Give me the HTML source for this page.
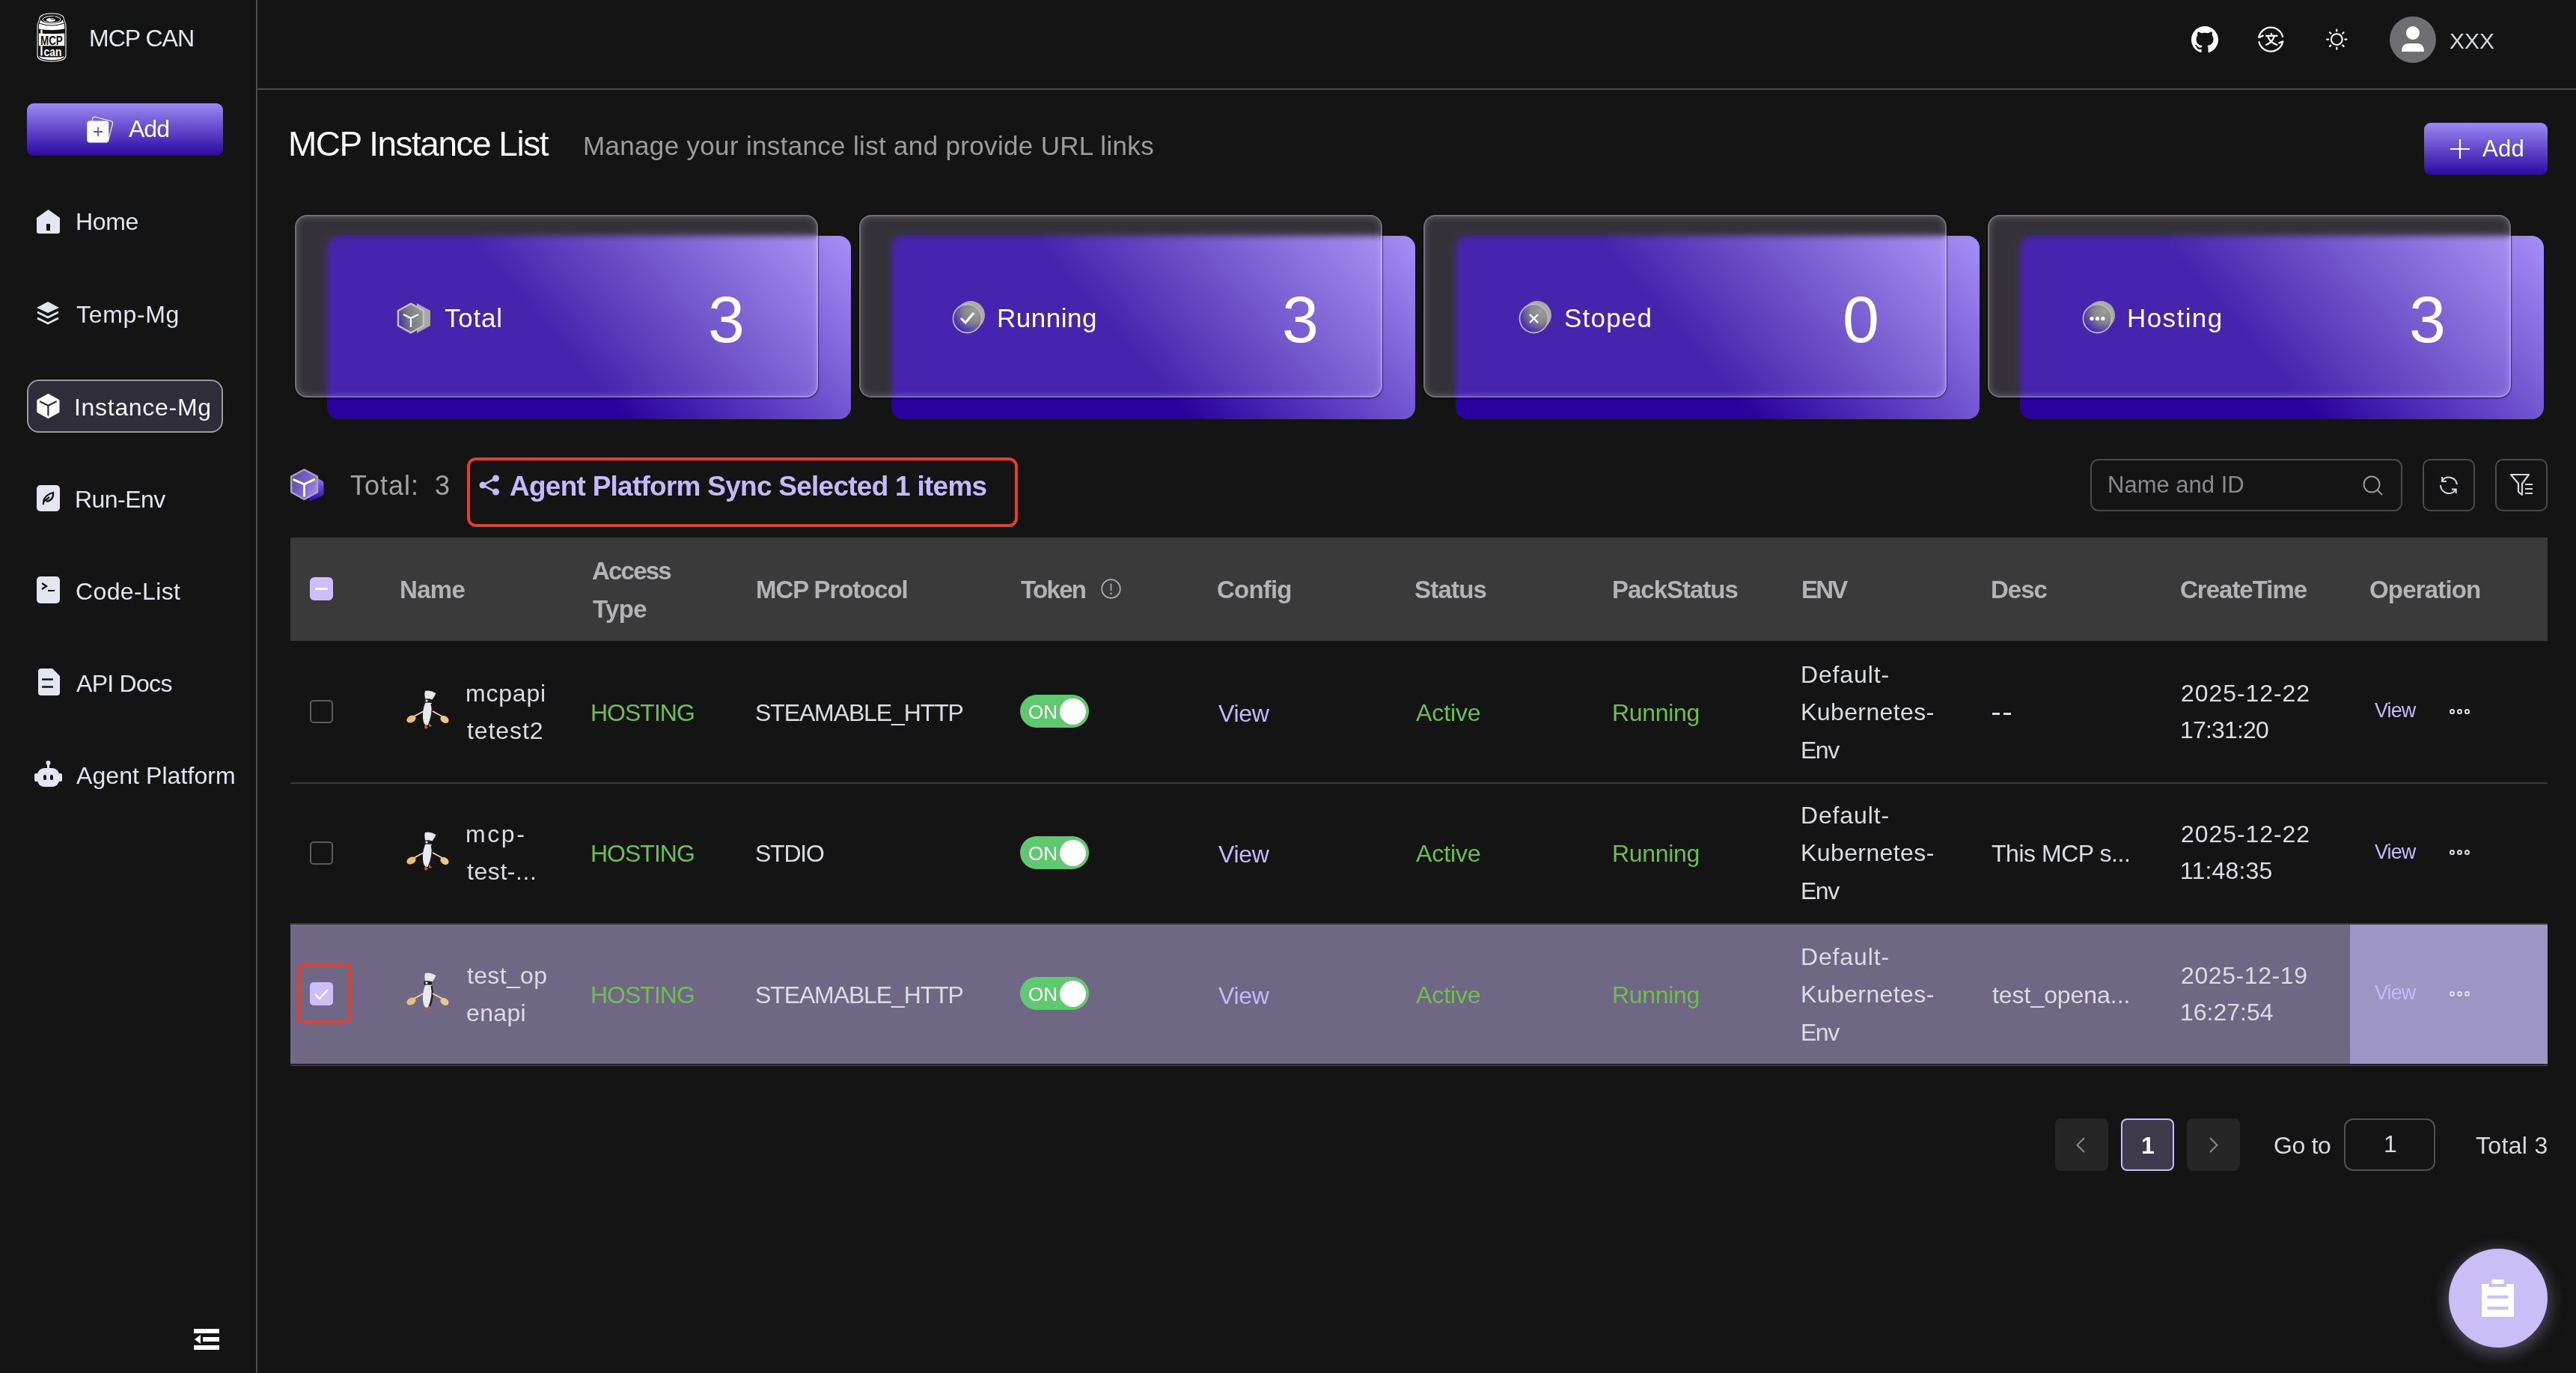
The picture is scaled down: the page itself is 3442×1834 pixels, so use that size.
<!DOCTYPE html><html><head><meta charset="utf-8"><title>MCP CAN</title><style>
html,body{margin:0;padding:0;width:3442px;height:1834px;overflow:hidden;background:#141414;font-family:"Liberation Sans",sans-serif;}
.t{position:absolute;white-space:nowrap;will-change:transform;}
.a{position:absolute;}
svg{position:absolute;overflow:visible;}
</style></head><body>
<div class="a" style="left:342px;top:0;width:2px;height:1834px;background:#4a4a4a"></div>
<div class="a" style="left:344px;top:118px;width:3098px;height:2px;background:#4a4a4a"></div>
<svg style="left:49px;top:17px" width="40" height="66" viewBox="0 0 40 66">
<path d="M3 9 Q3 0.5 20 0.5 Q37 0.5 37 9 L38.5 13 Q40 16 39.5 20 V57 Q39.5 65.5 20 65.5 Q0.5 65.5 0.5 57 V20 Q0 16 1.5 13 Z" fill="#fff"/>
<path d="M4.5 9.5 Q4.5 2.2 20 2.2 Q35.5 2.2 35.5 9.5 L37 13.5 Q38.2 16 37.8 20 V56.5 Q37.8 63.8 20 63.8 Q2.2 63.8 2.2 56.5 V20 Q1.8 16 3 13.5 Z" fill="#fff" stroke="#111" stroke-width="1.3"/>
<ellipse cx="20" cy="8.5" rx="15" ry="6" fill="#111"/>
<ellipse cx="20" cy="9" rx="12" ry="4.3" fill="none" stroke="#fff" stroke-width="1"/>
<ellipse cx="19" cy="9.5" rx="6" ry="2.6" fill="#fff"/>
<ellipse cx="22" cy="7" rx="3.5" ry="1.8" fill="none" stroke="#111" stroke-width="1"/>
<path d="M3 14 Q20 20 37 14" fill="none" stroke="#111" stroke-width="1.2"/>
<path d="M2.2 21.5 Q20 25 37.8 21.5 V27.4 Q20 29 2.2 27.4 Z" fill="#111"/>
<path d="M2.2 44.3 H37.8 V57 Q37.8 59.5 20 59.5 Q2.2 59.5 2.2 57 Z" fill="#111"/>
<rect x="5.3" y="22.5" width="2.3" height="35" fill="#fff"/>
<text x="5" y="43.1" font-family="Liberation Sans" font-weight="700" font-size="17" textLength="29.7" lengthAdjust="spacingAndGlyphs" fill="#111">MCP</text>
<text x="9.6" y="57.6" font-family="Liberation Sans" font-weight="700" font-size="16" textLength="23.9" lengthAdjust="spacingAndGlyphs" fill="#fff">can</text>
</svg>
<div class="t" style="left:119px;top:34.9px;font-size:32px;line-height:32px;color:#e6e9f2;font-weight:400;letter-spacing:-1.0px;">MCP CAN</div>
<div class="a" style="left:36px;top:138px;width:262px;height:70px;border-radius:9px;background:linear-gradient(180deg,#9d89f3 0%,#6248cc 50%,#2a09a0 100%)"></div>
<svg style="left:116px;top:155px" width="38" height="38" viewBox="0 0 38 38">
<rect x="0" y="0" width="27.5" height="27.5" rx="3" transform="translate(8.6 0.5) rotate(14.7)" fill="none" stroke="#fff" stroke-width="1.2"/>
<rect x="0.3" y="6.6" width="29" height="29" rx="3.5" fill="#fff"/>
<path d="M15 15 V27 M9 21 H21" stroke="#6a52d6" stroke-width="1.8"/>
</svg>
<div class="t" style="left:172px;top:155.5px;font-size:32px;line-height:32px;color:#fff;font-weight:400;letter-spacing:-1.0px;">Add</div>
<div class="a" style="left:36px;top:507px;width:258px;height:67px;border:2px solid #9a9a9e;border-radius:16px;background:#2f2d3a"></div>
<svg style="left:49px;top:280px" width="31" height="32" viewBox="0 0 31 32"><path d="M15.5 0 L31 11 V29 Q31 32 28 32 H3 Q0 32 0 29 V11 Z" fill="#e3e6f0"/><rect x="13" y="19" width="5" height="9" fill="#121212"/></svg>
<div class="t" style="left:101px;top:279.9px;font-size:32px;line-height:32px;color:#e3e6f0;font-weight:400;letter-spacing:-0.333px;">Home</div>
<svg style="left:49px;top:403px" width="30" height="31" viewBox="0 0 30 31"><path d="M15 0 L30 8 L15 15 L0 8 Z" fill="#e3e6f0"/><path d="M1 14 L15 21 L29 14 M1 22 L15 29 L29 22" fill="none" stroke="#e3e6f0" stroke-width="2.6"/></svg>
<div class="t" style="left:102px;top:403.9px;font-size:32px;line-height:32px;color:#e3e6f0;font-weight:400;letter-spacing:0.667px;">Temp-Mg</div>
<svg style="left:49px;top:526px" width="31" height="33" viewBox="0 0 31 33"><path d="M15.4 1.5 L29 9 V24 L15.4 31.5 L1.8 24 V9 Z" fill="#fff" stroke="#fff" stroke-width="3" stroke-linejoin="round"/><path d="M4.8 10.5 L15.4 15.8 L25.9 10.5 M15.4 15.8 V28.5" stroke="#2f2d3a" stroke-width="2.2" stroke-linecap="round" fill="none"/></svg>
<div class="t" style="left:99px;top:528.3px;font-size:32px;line-height:32px;color:#f4f4f8;font-weight:400;letter-spacing:0.7px;">Instance-Mg</div>
<svg style="left:49px;top:648px" width="31" height="35" viewBox="0 0 31 35"><rect x="0" y="0" width="31" height="35" rx="5" fill="#e3e6f0"/><path d="M9 26 Q8 14 22 10 Q23 20 13 22 M10 22 Q14 18 17 16" fill="none" stroke="#121212" stroke-width="2.2"/></svg>
<div class="t" style="left:100px;top:650.6px;font-size:32px;line-height:32px;color:#e3e6f0;font-weight:400;letter-spacing:-0.55px;">Run-Env</div>
<svg style="left:49px;top:770px" width="31" height="36" viewBox="0 0 31 36"><rect x="0" y="0" width="31" height="36" rx="5" fill="#e3e6f0"/><path d="M7 9 L13 13 L7 17 M15 19 H24" fill="none" stroke="#121212" stroke-width="2.2"/></svg>
<div class="t" style="left:101px;top:773.9px;font-size:32px;line-height:32px;color:#e3e6f0;font-weight:400;letter-spacing:0.375px;">Code-List</div>
<svg style="left:51px;top:893px" width="29" height="36" viewBox="0 0 29 36"><path d="M4 0 H19 L29 10 V32 Q29 36 25 36 H4 Q0 36 0 32 V4 Q0 0 4 0 Z" fill="#e3e6f0"/><path d="M6 14.5 H19 M6 24.5 H19" stroke="#121212" stroke-width="2.4" stroke-linecap="round"/></svg>
<div class="t" style="left:102px;top:896.7px;font-size:32px;line-height:32px;color:#e3e6f0;font-weight:400;letter-spacing:-0.714px;">API Docs</div>
<svg style="left:46px;top:1016px" width="37" height="35" viewBox="0 0 37 35"><circle cx="18.5" cy="3" r="3" fill="#e3e6f0"/><rect x="17" y="3" width="3" height="7" fill="#e3e6f0"/><rect x="4" y="10" width="29" height="25" rx="9" fill="#e3e6f0"/><rect x="0" y="17" width="5" height="11" rx="2" fill="#e3e6f0"/><rect x="32" y="17" width="5" height="11" rx="2" fill="#e3e6f0"/><rect x="12" y="19" width="4" height="7" rx="2" fill="#121212"/><rect x="21" y="19" width="4" height="7" rx="2" fill="#121212"/></svg>
<div class="t" style="left:102px;top:1019.9px;font-size:32px;line-height:32px;color:#e3e6f0;font-weight:400;letter-spacing:0.077px;">Agent Platform</div>
<svg style="left:259px;top:1775px" width="34" height="28" viewBox="0 0 34 28"><rect x="0" y="0" width="34" height="6" fill="#fff"/><rect x="12" y="11" width="22" height="6" fill="#fff"/><path d="M1 14 L9 8 V20 Z" fill="#fff"/><rect x="0" y="22" width="34" height="6" fill="#fff"/></svg>
<svg style="left:2928px;top:35px" width="36" height="36" viewBox="0 0 16 16"><path fill="#fff" d="M8 0C3.58 0 0 3.58 0 8c0 3.54 2.29 6.53 5.47 7.59.4.07.55-.17.55-.38 0-.19-.01-.82-.01-1.49-2.01.37-2.53-.49-2.69-.94-.09-.23-.48-.94-.82-1.13-.28-.15-.68-.52-.01-.53.63-.01 1.08.58 1.23.82.72 1.21 1.87.87 2.33.66.07-.52.28-.87.51-1.07-1.78-.2-3.64-.89-3.64-3.95 0-.87.31-1.59.82-2.15-.08-.2-.36-1.02.08-2.12 0 0 .67-.21 2.2.82.64-.18 1.32-.27 2-.27.68 0 1.36.09 2 .27 1.53-1.04 2.2-.82 2.2-.82.44 1.1.16 1.92.08 2.12.51.56.82 1.27.82 2.15 0 3.07-1.87 3.75-3.65 3.95.29.25.54.73.54 1.48 0 1.07-.01 1.93-.01 2.2 0 .21.15.46.55.38A8.013 8.013 0 0016 8c0-4.42-3.58-8-8-8z"/></svg>
<svg style="left:3017px;top:35px" width="36" height="36" viewBox="0 0 36 36">
<path d="M1.3 14.8 A16.3 16.3 0 0 1 33.3 14.8" fill="none" stroke="#fff" stroke-width="2.3"/>
<path d="M1.3 20.4 A16.3 16.3 0 0 0 33.3 20.4" fill="none" stroke="#fff" stroke-width="2.3"/>
<path d="M1.3 14.8 L6.6 12.8 M33.3 20.4 L28.5 22.4" fill="none" stroke="#fff" stroke-width="2.3" stroke-linecap="round"/>
<path d="M17.3 9.4 L18.7 11.9 M10.2 12.8 H26.3 M21.8 13.6 Q19 22 10.2 25.2 M13.3 13.6 Q16 22 26.3 25.2" fill="none" stroke="#fff" stroke-width="2.2"/>
</svg>
<svg style="left:3107px;top:37px" width="32" height="32" viewBox="0 0 32 32">
<circle cx="15.3" cy="15.6" r="7.4" fill="none" stroke="#fff" stroke-width="2.1"/>
<g stroke="#fff" stroke-width="2.2" stroke-linecap="round">
<path d="M15.3 2.5 V4.5 M15.3 26.7 V28.7 M2.2 15.6 H4.2 M26.4 15.6 H28.4 M6 6.3 L7.4 7.7 M23.2 23.5 L24.6 24.9 M24.6 6.3 L23.2 7.7 M7.4 23.5 L6 24.9"/>
</g></svg>
<svg style="left:3193px;top:22px" width="62" height="62" viewBox="0 0 62 62">
<circle cx="31" cy="31" r="31" fill="#6e6e73"/>
<circle cx="31" cy="22" r="9" fill="#fff"/>
<path d="M16 47 Q16 36 26 36 H36 Q46 36 46 47 Z" fill="#fff"/>
</svg>
<div class="t" style="left:3273px;top:40.1px;font-size:30px;line-height:30px;color:#d4d4dc;font-weight:400;letter-spacing:0.0px;">XXX</div>
<div class="t" style="left:385px;top:169.1px;font-size:46px;line-height:46px;color:#fafafa;font-weight:400;letter-spacing:-1.5px;">MCP Instance List</div>
<div class="t" style="left:779px;top:177.4px;font-size:35px;line-height:35px;color:#9c9c9c;font-weight:400;letter-spacing:0.326px;">Manage your instance list and provide URL links</div>
<div class="a" style="left:3239px;top:164px;width:165px;height:70px;border-radius:9px;background:linear-gradient(180deg,#9d89f3 0%,#6248cc 50%,#2a09a0 100%)"></div>
<svg style="left:3274px;top:186px" width="26" height="26" viewBox="0 0 26 26"><path d="M13 0 V26 M0 13 H26" stroke="#fff" stroke-width="2.2"/></svg>
<div class="t" style="left:3316.5px;top:182.8px;font-size:31px;line-height:31px;color:#fff;font-weight:400;letter-spacing:0.25px;">Add</div>
<div class="a" style="left:437px;top:315px;width:700px;height:245px;border-radius:16px;background:linear-gradient(49deg,#2a039e 0%,#2a039e 44%,#a590f6 100%)"></div>
<div class="a" style="left:394px;top:287px;width:699px;height:244px;box-sizing:border-box;border-radius:16px;border:2px solid rgba(255,255,255,0.3);background:rgba(232,218,255,0.155);backdrop-filter:blur(4px);-webkit-backdrop-filter:blur(4px);box-shadow:inset 0 0 10px rgba(225,215,255,0.28),0 0 0 1px rgba(0,0,0,0.35),0 1px 3px rgba(0,0,0,0.5)"></div>
<svg style="left:530px;top:404px" width="46" height="42" viewBox="0 0 46 42"><defs><linearGradient id="g0" x1="0" y1="0.6" x2="1" y2="0.3"><stop offset="0" stop-color="#4a2fae" stop-opacity="0.9"/><stop offset="0.4" stop-color="#7a7a80"/><stop offset="1" stop-color="#9a9a9a"/></linearGradient></defs><path d="M27 1 L45 11 V31 L27 41 Z" fill="#a8a8a8"/><path d="M19 1.5 L36 11 V31 L19 40.5 L2 31 V11 Z" fill="url(#g0)" stroke="#c4c4c4" stroke-width="2.4" stroke-linejoin="round"/><path d="M9 16 L19 21 L29 16 M19 21 V33" stroke="#fff" stroke-width="2.2" fill="none"/></svg>
<div class="t" style="left:594px;top:407.4px;font-size:35px;line-height:35px;color:#fff;font-weight:400;letter-spacing:0.75px;">Total</div>
<div class="t" style="left:946px;top:382.5px;font-size:88px;line-height:88px;color:#fff;font-weight:400;letter-spacing:2.0px;">3</div>
<div class="a" style="left:1191px;top:315px;width:700px;height:245px;border-radius:16px;background:linear-gradient(49deg,#2a039e 0%,#2a039e 44%,#a590f6 100%)"></div>
<div class="a" style="left:1148px;top:287px;width:699px;height:244px;box-sizing:border-box;border-radius:16px;border:2px solid rgba(255,255,255,0.3);background:rgba(232,218,255,0.155);backdrop-filter:blur(4px);-webkit-backdrop-filter:blur(4px);box-shadow:inset 0 0 10px rgba(225,215,255,0.28),0 0 0 1px rgba(0,0,0,0.35),0 1px 3px rgba(0,0,0,0.5)"></div>
<svg style="left:1272px;top:402px" width="44" height="44" viewBox="0 0 44 44"><defs><radialGradient id="g1" cx="0.75" cy="0.25" r="0.95"><stop offset="0" stop-color="#9c9c9c"/><stop offset="0.4" stop-color="#878789"/><stop offset="0.8" stop-color="#4a30b0"/></radialGradient></defs><circle cx="25" cy="19" r="19" fill="#aaa"/><circle cx="20.5" cy="23.5" r="19" fill="url(#g1)" stroke="#b8b8b8" stroke-width="1.8"/><path d="M12 23 L18 29 L29 16" stroke="#fff" stroke-width="3" fill="none"/></svg>
<div class="t" style="left:1332px;top:407.4px;font-size:35px;line-height:35px;color:#fff;font-weight:400;letter-spacing:0.5px;">Running</div>
<div class="t" style="left:1713px;top:382.5px;font-size:88px;line-height:88px;color:#fff;font-weight:400;letter-spacing:3.0px;">3</div>
<div class="a" style="left:1945px;top:315px;width:700px;height:245px;border-radius:16px;background:linear-gradient(49deg,#2a039e 0%,#2a039e 44%,#a590f6 100%)"></div>
<div class="a" style="left:1902px;top:287px;width:699px;height:244px;box-sizing:border-box;border-radius:16px;border:2px solid rgba(255,255,255,0.3);background:rgba(232,218,255,0.155);backdrop-filter:blur(4px);-webkit-backdrop-filter:blur(4px);box-shadow:inset 0 0 10px rgba(225,215,255,0.28),0 0 0 1px rgba(0,0,0,0.35),0 1px 3px rgba(0,0,0,0.5)"></div>
<svg style="left:2029px;top:402px" width="44" height="44" viewBox="0 0 44 44"><defs><radialGradient id="g2" cx="0.75" cy="0.25" r="0.95"><stop offset="0" stop-color="#9c9c9c"/><stop offset="0.4" stop-color="#878789"/><stop offset="0.8" stop-color="#4a30b0"/></radialGradient></defs><circle cx="25" cy="19" r="19" fill="#aaa"/><circle cx="20.5" cy="23.5" r="19" fill="url(#g2)" stroke="#b8b8b8" stroke-width="1.8"/><path d="M15 18 L26 29 M26 18 L15 29" stroke="#fff" stroke-width="2.2" fill="none"/></svg>
<div class="t" style="left:2090px;top:407.4px;font-size:35px;line-height:35px;color:#fff;font-weight:400;letter-spacing:1.2px;">Stoped</div>
<div class="t" style="left:2462px;top:382.5px;font-size:88px;line-height:88px;color:#fff;font-weight:400;letter-spacing:4.0px;">0</div>
<div class="a" style="left:2699px;top:315px;width:700px;height:245px;border-radius:16px;background:linear-gradient(49deg,#2a039e 0%,#2a039e 44%,#a590f6 100%)"></div>
<div class="a" style="left:2656px;top:287px;width:699px;height:244px;box-sizing:border-box;border-radius:16px;border:2px solid rgba(255,255,255,0.3);background:rgba(232,218,255,0.155);backdrop-filter:blur(4px);-webkit-backdrop-filter:blur(4px);box-shadow:inset 0 0 10px rgba(225,215,255,0.28),0 0 0 1px rgba(0,0,0,0.35),0 1px 3px rgba(0,0,0,0.5)"></div>
<svg style="left:2782px;top:402px" width="44" height="44" viewBox="0 0 44 44"><defs><radialGradient id="g3" cx="0.75" cy="0.25" r="0.95"><stop offset="0" stop-color="#9c9c9c"/><stop offset="0.4" stop-color="#878789"/><stop offset="0.8" stop-color="#4a30b0"/></radialGradient></defs><circle cx="25" cy="19" r="19" fill="#aaa"/><circle cx="20.5" cy="23.5" r="19" fill="url(#g3)" stroke="#b8b8b8" stroke-width="1.8"/><circle cx="13" cy="23.5" r="2.6" fill="#fff"/><circle cx="20.5" cy="23.5" r="2.6" fill="#fff"/><circle cx="28" cy="23.5" r="2.6" fill="#fff"/></svg>
<div class="t" style="left:2841.5px;top:407.4px;font-size:35px;line-height:35px;color:#fff;font-weight:400;letter-spacing:1.417px;">Hosting</div>
<div class="t" style="left:3219px;top:382.5px;font-size:88px;line-height:88px;color:#fff;font-weight:400;letter-spacing:3.0px;">3</div>
<svg style="left:388px;top:626px" width="46" height="44" viewBox="0 0 46 44"><defs>
<linearGradient id="tcb" x1="0" y1="0" x2="0" y2="1"><stop offset="0" stop-color="#a088f5"/><stop offset="1" stop-color="#2a08b0"/></linearGradient>
<linearGradient id="tcf" x1="0" y1="0.2" x2="1" y2="0.8"><stop offset="0" stop-color="#5c4a98"/><stop offset="0.5" stop-color="#7a60d0"/><stop offset="1" stop-color="#a090e0"/></linearGradient></defs>
<path d="M27 8 L43 16.5 Q44.5 17.5 44.5 19.5 V33 Q44.5 35 43 36 L29 42.5 Q27 43.5 25 42.5 Z" fill="url(#tcb)"/>
<path d="M18.5 1.2 L36 10.5 V31.5 L18.5 41 L1.2 31.5 V10.5 Z" fill="url(#tcf)" stroke="#a9a2bf" stroke-width="2.4" stroke-linejoin="round"/>
<path d="M4.8 14.8 L18.5 20.8 L31.8 14.6 M18.5 20.8 V36.3" stroke="#fff" stroke-width="2.9" stroke-linecap="round" fill="none"/></svg>
<div class="t" style="left:468px;top:630.5px;font-size:36px;line-height:36px;color:#a3a3a3;font-weight:400;letter-spacing:1.0px;">Total:</div>
<div class="t" style="left:581px;top:630.5px;font-size:36px;line-height:36px;color:#a3a3a3;font-weight:400;letter-spacing:1.0px;">3</div>
<div class="a" style="left:624px;top:611px;width:736px;height:93px;box-sizing:border-box;border:4px solid #e53f2b;border-radius:12px"></div>
<svg style="left:640px;top:634px" width="28" height="28" viewBox="0 0 28 28"><circle cx="22.5" cy="5" r="4.5" fill="#c6b9fb"/><circle cx="5" cy="14" r="4.5" fill="#c6b9fb"/><circle cx="22.5" cy="23" r="4.5" fill="#c6b9fb"/><path d="M22 5 L5 14 L22 23" stroke="#c6b9fb" stroke-width="2.6" fill="none"/></svg>
<div class="t" style="left:681px;top:630.7px;font-size:37px;line-height:37px;color:#c6b9fb;font-weight:700;letter-spacing:-0.743px;">Agent Platform Sync Selected 1 items</div>
<div class="a" style="left:2793px;top:613px;width:417px;height:70px;box-sizing:border-box;border:2px solid #4a4a4a;border-radius:11px"></div>
<div class="t" style="left:2816px;top:631.8px;font-size:31px;line-height:31px;color:#8a8a8e;font-weight:400;letter-spacing:0.0px;">Name and ID</div>
<svg style="left:3157px;top:635px" width="27" height="27" viewBox="0 0 27 27"><circle cx="12" cy="12" r="10.5" fill="none" stroke="#9a9a9e" stroke-width="2"/><path d="M20 20 L26 26" stroke="#9a9a9e" stroke-width="2"/></svg>
<div class="a" style="left:3237px;top:613px;width:70px;height:70px;box-sizing:border-box;border:2px solid #4a4a4a;border-radius:10px"></div>
<div class="a" style="left:3334px;top:613px;width:70px;height:70px;box-sizing:border-box;border:2px solid #4a4a4a;border-radius:10px"></div>
<svg style="left:3257px;top:633px" width="30" height="30" viewBox="0 0 30 30">
<path d="M6.3 9 A11 11 0 0 1 26 14" fill="none" stroke="#d8d8e0" stroke-width="2.1"/>
<path d="M4 15 A11 11 0 0 0 24 21.3" fill="none" stroke="#d8d8e0" stroke-width="2.1"/>
<path d="M6.2 4 V10 H12 M19 20.6 H24.7 V26" fill="none" stroke="#d8d8e0" stroke-width="2.1"/>
</svg>
<svg style="left:3354px;top:633px" width="31" height="29" viewBox="0 0 31 29"><path d="M1 1 H25 L16 13 V28 L11 24 V13 Z" fill="none" stroke="#d8d8e0" stroke-width="2.2" stroke-linejoin="round"/><path d="M20 14 H30 M20 20 H30 M20 26 H30" stroke="#d8d8e0" stroke-width="2.2"/></svg>
<div class="a" style="left:388px;top:718px;width:3016px;height:138px;background:#3a3a3a"></div>
<div class="a" style="left:414px;top:771px;width:31px;height:31px;border-radius:6px;background:#cdbdfc"></div>
<div class="a" style="left:421px;top:785px;width:17px;height:3px;background:#fff"></div>
<div class="t" style="left:534px;top:771.1px;font-size:33px;line-height:33px;color:#b3b3b8;font-weight:700;letter-spacing:-0.667px;">Name</div>
<div class="t" style="left:791px;top:745.5px;font-size:33px;line-height:33px;color:#b3b3b8;font-weight:700;letter-spacing:-1.8px;">Access</div>
<div class="t" style="left:792px;top:797.1px;font-size:33px;line-height:33px;color:#b3b3b8;font-weight:700;letter-spacing:-0.667px;">Type</div>
<div class="t" style="left:1009.7px;top:771.1px;font-size:33px;line-height:33px;color:#b3b3b8;font-weight:700;letter-spacing:-1.091px;">MCP Protocol</div>
<div class="t" style="left:1364px;top:771.1px;font-size:33px;line-height:33px;color:#b3b3b8;font-weight:700;letter-spacing:-1.675px;">Token</div>
<div class="t" style="left:1626px;top:771.1px;font-size:33px;line-height:33px;color:#b3b3b8;font-weight:700;letter-spacing:-0.8px;">Config</div>
<div class="t" style="left:1890px;top:771.1px;font-size:33px;line-height:33px;color:#b3b3b8;font-weight:700;letter-spacing:-0.8px;">Status</div>
<div class="t" style="left:2153.6px;top:771.1px;font-size:33px;line-height:33px;color:#b3b3b8;font-weight:700;letter-spacing:-1.011px;">PackStatus</div>
<div class="t" style="left:2407px;top:771.1px;font-size:33px;line-height:33px;color:#b3b3b8;font-weight:700;letter-spacing:-2.75px;">ENV</div>
<div class="t" style="left:2659.6px;top:771.1px;font-size:33px;line-height:33px;color:#b3b3b8;font-weight:700;letter-spacing:-1.0px;">Desc</div>
<div class="t" style="left:2913px;top:771.1px;font-size:33px;line-height:33px;color:#b3b3b8;font-weight:700;letter-spacing:-1.0px;">CreateTime</div>
<div class="t" style="left:3166.4px;top:771.1px;font-size:33px;line-height:33px;color:#b3b3b8;font-weight:700;letter-spacing:-0.825px;">Operation</div>
<svg style="left:1471px;top:773px" width="27" height="27" viewBox="0 0 27 27"><circle cx="13.5" cy="13.5" r="12.3" fill="none" stroke="#b3b3b8" stroke-width="1.7"/><path d="M13.5 6.5 V16" stroke="#b3b3b8" stroke-width="1.6"/><circle cx="13.5" cy="19.8" r="1.2" fill="#b3b3b8"/></svg>
<div class="a" style="left:388px;top:1044.5px;width:3016px;height:2px;background:#383838"></div>
<div class="a" style="left:414px;top:935.0px;width:31px;height:31px;box-sizing:border-box;border-radius:5px;border:2px solid #5c5c5c"></div>
<svg style="left:544px;top:921.0px" width="56" height="56" viewBox="0 0 56 56">
<path d="M24 2 Q31 0 38.5 5 Q37 9 33.5 13.5 H24.5 Q22.5 7 24 2 Z" fill="#e6e6ec"/>
<path d="M22.5 13 Q28 11.5 33.5 13.5 L33 17 Q28 19 22.5 17 Z" fill="#1c1c1c"/>
<circle cx="26" cy="15" r="1.6" fill="#fff"/>
<path d="M25 17.5 L31 17.5 L28 20.5 Z" fill="#e8b020"/>
<path d="M24 18 Q19 32 22 44 Q25 50 28 47 Q34 32 33 18 Z" fill="#e8e8ee"/>
<path d="M32.5 19 Q36 32 30 47" stroke="#1a1a1a" stroke-width="2" fill="none"/>
<path d="M22 29 L9 36" stroke="#efd9a8" stroke-width="1.8"/>
<path d="M34 29 L47 36" stroke="#efd9a8" stroke-width="1.8"/>
<ellipse cx="5.5" cy="39.5" rx="6.5" ry="4.6" transform="rotate(-28 5.5 39.5)" fill="#e8bd78"/>
<ellipse cx="50" cy="40" rx="6" ry="4.4" transform="rotate(32 50 40)" fill="#ecc688"/>
<path d="M24.5 47 L23 52 L27.5 50.5" fill="#c0603c"/>
<path d="M30 45 L32 49 L29 49.5 Z" fill="#c0603c"/>
<path d="M23 48 L24.5 53 L28 51 Z M29 45.5 L33.5 48.5 L29.5 50 Z" fill="#b85a36"/>
</svg>
<div class="t" style="left:622px;top:909.9px;font-size:32px;line-height:32px;color:#dcdde3;font-weight:400;letter-spacing:0.8px;">mcpapi</div>
<div class="t" style="left:624px;top:959.9px;font-size:32px;line-height:32px;color:#dcdde3;font-weight:400;letter-spacing:0.917px;">tetest2</div>
<div class="t" style="left:789px;top:935.9px;font-size:32px;line-height:32px;color:#6dbf4e;font-weight:400;letter-spacing:-1.0px;">HOSTING</div>
<div class="t" style="left:1009px;top:935.9px;font-size:32px;line-height:32px;color:#dcdde3;font-weight:400;letter-spacing:-1.115px;">STEAMABLE_HTTP</div>
<div class="a" style="left:1363px;top:928.0px;width:92px;height:44px;border-radius:22px;background:#5fc96f"></div>
<div class="a" style="left:1416px;top:933.0px;width:35px;height:35px;border-radius:50%;background:#fff"></div>
<div class="t" style="left:1374px;top:938.0px;font-size:26px;line-height:26px;color:#fff;font-weight:400;letter-spacing:0.0px;">ON</div>
<div class="t" style="left:1628px;top:936.6px;font-size:32px;line-height:32px;color:#c6b9fb;font-weight:400;letter-spacing:-0.333px;">View</div>
<div class="t" style="left:1892px;top:935.9px;font-size:32px;line-height:32px;color:#6dbf4e;font-weight:400;letter-spacing:-0.1px;">Active</div>
<div class="t" style="left:2154px;top:935.9px;font-size:32px;line-height:32px;color:#6dbf4e;font-weight:400;letter-spacing:-0.333px;">Running</div>
<div class="t" style="left:2406px;top:884.9px;font-size:32px;line-height:32px;color:#dcdde3;font-weight:400;letter-spacing:0.857px;">Default-</div>
<div class="t" style="left:2406px;top:934.9px;font-size:32px;line-height:32px;color:#dcdde3;font-weight:400;letter-spacing:0.4px;">Kubernetes-</div>
<div class="t" style="left:2406px;top:985.9px;font-size:32px;line-height:32px;color:#dcdde3;font-weight:400;letter-spacing:-1.5px;">Env</div>
<div class="a" style="left:2662px;top:952.0px;width:10px;height:3px;background:#dcdde3"></div>
<div class="a" style="left:2677px;top:952.0px;width:10px;height:3px;background:#dcdde3"></div>
<div class="t" style="left:2913.7px;top:909.5px;font-size:32px;line-height:32px;color:#dcdde3;font-weight:400;letter-spacing:0.922px;">2025-12-22</div>
<div class="t" style="left:2912.7px;top:958.9px;font-size:32px;line-height:32px;color:#dcdde3;font-weight:400;letter-spacing:-0.814px;">17:31:20</div>
<div class="t" style="left:3173px;top:936.1px;font-size:27px;line-height:27px;color:#c6b9fb;font-weight:400;letter-spacing:-0.9px;">View</div>
<div class="a" style="left:3273px;top:946.5px;width:7px;height:7px;box-sizing:border-box;border-radius:50%;border:2px solid #e0e0e6"></div>
<div class="a" style="left:3283px;top:946.5px;width:7px;height:7px;box-sizing:border-box;border-radius:50%;border:2px solid #e0e0e6"></div>
<div class="a" style="left:3293px;top:946.5px;width:7px;height:7px;box-sizing:border-box;border-radius:50%;border:2px solid #e0e0e6"></div>
<div class="a" style="left:388px;top:1233.0px;width:3016px;height:2px;background:#383838"></div>
<div class="a" style="left:414px;top:1123.5px;width:31px;height:31px;box-sizing:border-box;border-radius:5px;border:2px solid #5c5c5c"></div>
<svg style="left:544px;top:1109.5px" width="56" height="56" viewBox="0 0 56 56">
<path d="M24 2 Q31 0 38.5 5 Q37 9 33.5 13.5 H24.5 Q22.5 7 24 2 Z" fill="#e6e6ec"/>
<path d="M22.5 13 Q28 11.5 33.5 13.5 L33 17 Q28 19 22.5 17 Z" fill="#1c1c1c"/>
<circle cx="26" cy="15" r="1.6" fill="#fff"/>
<path d="M25 17.5 L31 17.5 L28 20.5 Z" fill="#e8b020"/>
<path d="M24 18 Q19 32 22 44 Q25 50 28 47 Q34 32 33 18 Z" fill="#e8e8ee"/>
<path d="M32.5 19 Q36 32 30 47" stroke="#1a1a1a" stroke-width="2" fill="none"/>
<path d="M22 29 L9 36" stroke="#efd9a8" stroke-width="1.8"/>
<path d="M34 29 L47 36" stroke="#efd9a8" stroke-width="1.8"/>
<ellipse cx="5.5" cy="39.5" rx="6.5" ry="4.6" transform="rotate(-28 5.5 39.5)" fill="#e8bd78"/>
<ellipse cx="50" cy="40" rx="6" ry="4.4" transform="rotate(32 50 40)" fill="#ecc688"/>
<path d="M24.5 47 L23 52 L27.5 50.5" fill="#c0603c"/>
<path d="M30 45 L32 49 L29 49.5 Z" fill="#c0603c"/>
<path d="M23 48 L24.5 53 L28 51 Z M29 45.5 L33.5 48.5 L29.5 50 Z" fill="#b85a36"/>
</svg>
<div class="t" style="left:622px;top:1098.4px;font-size:32px;line-height:32px;color:#dcdde3;font-weight:400;letter-spacing:2.567px;">mcp-</div>
<div class="t" style="left:624px;top:1148.4px;font-size:32px;line-height:32px;color:#dcdde3;font-weight:400;letter-spacing:0.571px;">test-...</div>
<div class="t" style="left:789px;top:1124.4px;font-size:32px;line-height:32px;color:#6dbf4e;font-weight:400;letter-spacing:-1.0px;">HOSTING</div>
<div class="t" style="left:1009px;top:1124.4px;font-size:32px;line-height:32px;color:#dcdde3;font-weight:400;letter-spacing:-1.25px;">STDIO</div>
<div class="a" style="left:1363px;top:1116.5px;width:92px;height:44px;border-radius:22px;background:#5fc96f"></div>
<div class="a" style="left:1416px;top:1121.5px;width:35px;height:35px;border-radius:50%;background:#fff"></div>
<div class="t" style="left:1374px;top:1126.5px;font-size:26px;line-height:26px;color:#fff;font-weight:400;letter-spacing:0.0px;">ON</div>
<div class="t" style="left:1628px;top:1125.1px;font-size:32px;line-height:32px;color:#c6b9fb;font-weight:400;letter-spacing:-0.333px;">View</div>
<div class="t" style="left:1892px;top:1124.4px;font-size:32px;line-height:32px;color:#6dbf4e;font-weight:400;letter-spacing:-0.1px;">Active</div>
<div class="t" style="left:2154px;top:1124.4px;font-size:32px;line-height:32px;color:#6dbf4e;font-weight:400;letter-spacing:-0.333px;">Running</div>
<div class="t" style="left:2406px;top:1073.4px;font-size:32px;line-height:32px;color:#dcdde3;font-weight:400;letter-spacing:0.857px;">Default-</div>
<div class="t" style="left:2406px;top:1123.4px;font-size:32px;line-height:32px;color:#dcdde3;font-weight:400;letter-spacing:0.4px;">Kubernetes-</div>
<div class="t" style="left:2406px;top:1174.4px;font-size:32px;line-height:32px;color:#dcdde3;font-weight:400;letter-spacing:-1.5px;">Env</div>
<div class="t" style="left:2660.6px;top:1124.4px;font-size:32px;line-height:32px;color:#dcdde3;font-weight:400;letter-spacing:-0.467px;">This MCP s...</div>
<div class="t" style="left:2913.7px;top:1098.0px;font-size:32px;line-height:32px;color:#dcdde3;font-weight:400;letter-spacing:0.922px;">2025-12-22</div>
<div class="t" style="left:2912.7px;top:1147.4px;font-size:32px;line-height:32px;color:#dcdde3;font-weight:400;letter-spacing:0.143px;">11:48:35</div>
<div class="t" style="left:3173px;top:1124.6px;font-size:27px;line-height:27px;color:#c6b9fb;font-weight:400;letter-spacing:-0.9px;">View</div>
<div class="a" style="left:3273px;top:1135.0px;width:7px;height:7px;box-sizing:border-box;border-radius:50%;border:2px solid #e0e0e6"></div>
<div class="a" style="left:3283px;top:1135.0px;width:7px;height:7px;box-sizing:border-box;border-radius:50%;border:2px solid #e0e0e6"></div>
<div class="a" style="left:3293px;top:1135.0px;width:7px;height:7px;box-sizing:border-box;border-radius:50%;border:2px solid #e0e0e6"></div>
<div class="a" style="left:388px;top:1235.0px;width:2752px;height:186px;background:#6f6784"></div>
<div class="a" style="left:3140px;top:1235.0px;width:264px;height:186px;background:#9d95c3"></div>
<div class="a" style="left:388px;top:1421.5px;width:3016px;height:2px;background:#383838"></div>
<div class="a" style="left:414px;top:1312.0px;width:31px;height:31px;border-radius:5px;background:#cdbdfc"></div>
<svg style="left:419px;top:1318.0px" width="21" height="19" viewBox="0 0 21 19"><path d="M2 10 L8 16 L19 4" stroke="#fff" stroke-width="2.4" fill="none"/></svg>
<div class="a" style="left:397px;top:1287.0px;width:73px;height:80px;box-sizing:border-box;border:4px solid #e53f2b;border-radius:10px"></div>
<svg style="left:544px;top:1298.0px" width="56" height="56" viewBox="0 0 56 56">
<path d="M24 2 Q31 0 38.5 5 Q37 9 33.5 13.5 H24.5 Q22.5 7 24 2 Z" fill="#e6e6ec"/>
<path d="M22.5 13 Q28 11.5 33.5 13.5 L33 17 Q28 19 22.5 17 Z" fill="#1c1c1c"/>
<circle cx="26" cy="15" r="1.6" fill="#fff"/>
<path d="M25 17.5 L31 17.5 L28 20.5 Z" fill="#e8b020"/>
<path d="M24 18 Q19 32 22 44 Q25 50 28 47 Q34 32 33 18 Z" fill="#e8e8ee"/>
<path d="M32.5 19 Q36 32 30 47" stroke="#1a1a1a" stroke-width="2" fill="none"/>
<path d="M22 29 L9 36" stroke="#efd9a8" stroke-width="1.8"/>
<path d="M34 29 L47 36" stroke="#efd9a8" stroke-width="1.8"/>
<ellipse cx="5.5" cy="39.5" rx="6.5" ry="4.6" transform="rotate(-28 5.5 39.5)" fill="#e8bd78"/>
<ellipse cx="50" cy="40" rx="6" ry="4.4" transform="rotate(32 50 40)" fill="#ecc688"/>
<path d="M24.5 47 L23 52 L27.5 50.5" fill="#c0603c"/>
<path d="M30 45 L32 49 L29 49.5 Z" fill="#c0603c"/>
<path d="M23 48 L24.5 53 L28 51 Z M29 45.5 L33.5 48.5 L29.5 50 Z" fill="#b85a36"/>
</svg>
<div class="t" style="left:624px;top:1286.9px;font-size:32px;line-height:32px;color:#dcdde3;font-weight:400;letter-spacing:0.333px;">test_op</div>
<div class="t" style="left:623px;top:1336.9px;font-size:32px;line-height:32px;color:#dcdde3;font-weight:400;letter-spacing:0.35px;">enapi</div>
<div class="t" style="left:789px;top:1312.9px;font-size:32px;line-height:32px;color:#6dbf4e;font-weight:400;letter-spacing:-1.0px;">HOSTING</div>
<div class="t" style="left:1009px;top:1312.9px;font-size:32px;line-height:32px;color:#dcdde3;font-weight:400;letter-spacing:-1.115px;">STEAMABLE_HTTP</div>
<div class="a" style="left:1363px;top:1305.0px;width:92px;height:44px;border-radius:22px;background:#5fc96f"></div>
<div class="a" style="left:1416px;top:1310.0px;width:35px;height:35px;border-radius:50%;background:#fff"></div>
<div class="t" style="left:1374px;top:1315.0px;font-size:26px;line-height:26px;color:#fff;font-weight:400;letter-spacing:0.0px;">ON</div>
<div class="t" style="left:1628px;top:1313.6px;font-size:32px;line-height:32px;color:#c6b9fb;font-weight:400;letter-spacing:-0.333px;">View</div>
<div class="t" style="left:1892px;top:1312.9px;font-size:32px;line-height:32px;color:#6dbf4e;font-weight:400;letter-spacing:-0.1px;">Active</div>
<div class="t" style="left:2154px;top:1312.9px;font-size:32px;line-height:32px;color:#6dbf4e;font-weight:400;letter-spacing:-0.333px;">Running</div>
<div class="t" style="left:2406px;top:1261.9px;font-size:32px;line-height:32px;color:#dcdde3;font-weight:400;letter-spacing:0.857px;">Default-</div>
<div class="t" style="left:2406px;top:1311.9px;font-size:32px;line-height:32px;color:#dcdde3;font-weight:400;letter-spacing:0.4px;">Kubernetes-</div>
<div class="t" style="left:2406px;top:1362.9px;font-size:32px;line-height:32px;color:#dcdde3;font-weight:400;letter-spacing:-1.5px;">Env</div>
<div class="t" style="left:2661.6px;top:1312.9px;font-size:32px;line-height:32px;color:#dcdde3;font-weight:400;letter-spacing:-0.05px;">test_opena...</div>
<div class="t" style="left:2913.7px;top:1286.5px;font-size:32px;line-height:32px;color:#dcdde3;font-weight:400;letter-spacing:0.589px;">2025-12-19</div>
<div class="t" style="left:2912.7px;top:1335.9px;font-size:32px;line-height:32px;color:#dcdde3;font-weight:400;letter-spacing:0.0px;">16:27:54</div>
<div class="t" style="left:3173px;top:1313.1px;font-size:27px;line-height:27px;color:#c6b9fb;font-weight:400;letter-spacing:-0.9px;">View</div>
<div class="a" style="left:3273px;top:1323.5px;width:7px;height:7px;box-sizing:border-box;border-radius:50%;border:2px solid #e0e0e6"></div>
<div class="a" style="left:3283px;top:1323.5px;width:7px;height:7px;box-sizing:border-box;border-radius:50%;border:2px solid #e0e0e6"></div>
<div class="a" style="left:3293px;top:1323.5px;width:7px;height:7px;box-sizing:border-box;border-radius:50%;border:2px solid #e0e0e6"></div>
<div class="a" style="left:2746px;top:1494px;width:71px;height:70px;border-radius:8px;background:#262626"></div>
<svg style="left:2774px;top:1519px" width="12" height="21" viewBox="0 0 12 21"><path d="M11 1 L1.5 10.5 L11 20" stroke="#8a8a8a" stroke-width="2" fill="none"/></svg>
<div class="a" style="left:2834px;top:1494px;width:71px;height:70px;box-sizing:border-box;border-radius:8px;background:#3e3a4c;border:2px solid #c9bdfb"></div>
<div class="t" style="left:2861px;top:1513.9px;font-size:32px;line-height:32px;color:#fff;font-weight:700;letter-spacing:-2.0px;">1</div>
<div class="a" style="left:2922px;top:1494px;width:71px;height:70px;border-radius:8px;background:#262626"></div>
<svg style="left:2952px;top:1519px" width="12" height="21" viewBox="0 0 12 21"><path d="M1 1 L10.5 10.5 L1 20" stroke="#8a8a8a" stroke-width="2" fill="none"/></svg>
<div class="t" style="left:3037.5px;top:1513.9px;font-size:32px;line-height:32px;color:#dadade;font-weight:400;letter-spacing:-0.375px;">Go to</div>
<div class="a" style="left:3132px;top:1494px;width:122px;height:70px;box-sizing:border-box;border-radius:12px;border:2px solid #505050"></div>
<div class="t" style="left:3185px;top:1511.9px;font-size:32px;line-height:32px;color:#dadade;font-weight:400;letter-spacing:-3.0px;">1</div>
<div class="t" style="left:3308px;top:1513.9px;font-size:32px;line-height:32px;color:#dadade;font-weight:400;letter-spacing:0.333px;">Total 3</div>
<div class="a" style="left:3272px;top:1668px;width:132px;height:132px;border-radius:50%;background:#cbbdf8;box-shadow:0 5px 22px 2px rgba(200,190,250,0.36)"></div>
<svg style="left:3316px;top:1709px" width="43" height="50" viewBox="0 0 43 50"><rect x="13.5" y="0" width="16" height="6" fill="#fff"/><path d="M0 6 H10 V10 H33 V6 H43 V50 H0 Z" fill="#fff"/><rect x="7.5" y="21.5" width="28" height="4" fill="#cbbdf8"/><rect x="7.5" y="36.5" width="28" height="4" fill="#cbbdf8"/></svg>
</body></html>
